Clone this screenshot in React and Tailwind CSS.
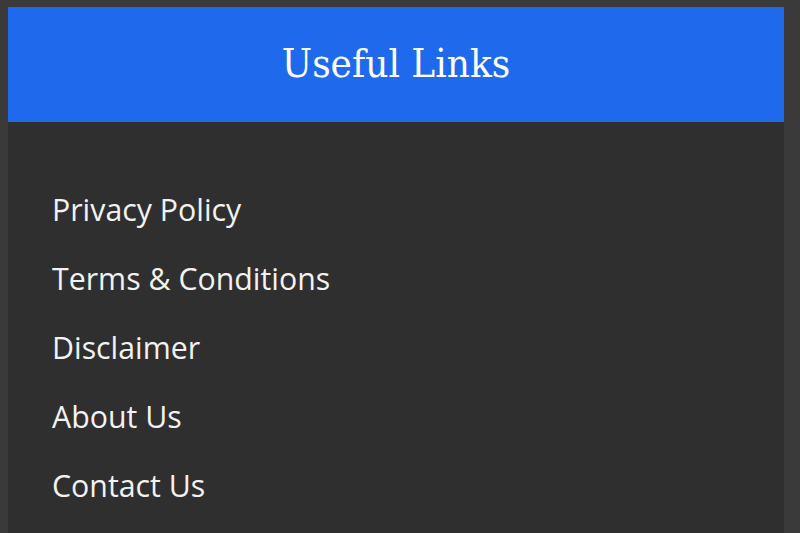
import React from 'react';

const links = ['Privacy Policy', 'Terms & Conditions', 'Disclaimer', 'About Us', 'Contact Us'];

export default function App() {
  return (
    <div className="h-[533px] overflow-hidden bg-[#3a3a3a] pt-[7px] pl-[8px] pr-[16px]">
      <div className="h-full bg-[#2f2f2f]">
        {/* header */}
        <div className="flex h-[115px] items-center justify-center bg-[#1f6aec] pb-[3px]">
          <h2
            className="text-[40px] text-white"
            style={{ fontFamily: '"DejaVu Serif Condensed", "DejaVu Serif", serif' }}
          >
            Useful Links
          </h2>
        </div>

        <ul className="pl-[44px] pt-[53px]" style={{ fontFamily: '"Open Sans", sans-serif' }}>
          {links.map((l) => (
            <li key={l} className="text-[30.3px] leading-[69px] text-[#f2f2f2]">
              {l}
            </li>
          ))}
        </ul>
      </div>
    </div>
  );
}
